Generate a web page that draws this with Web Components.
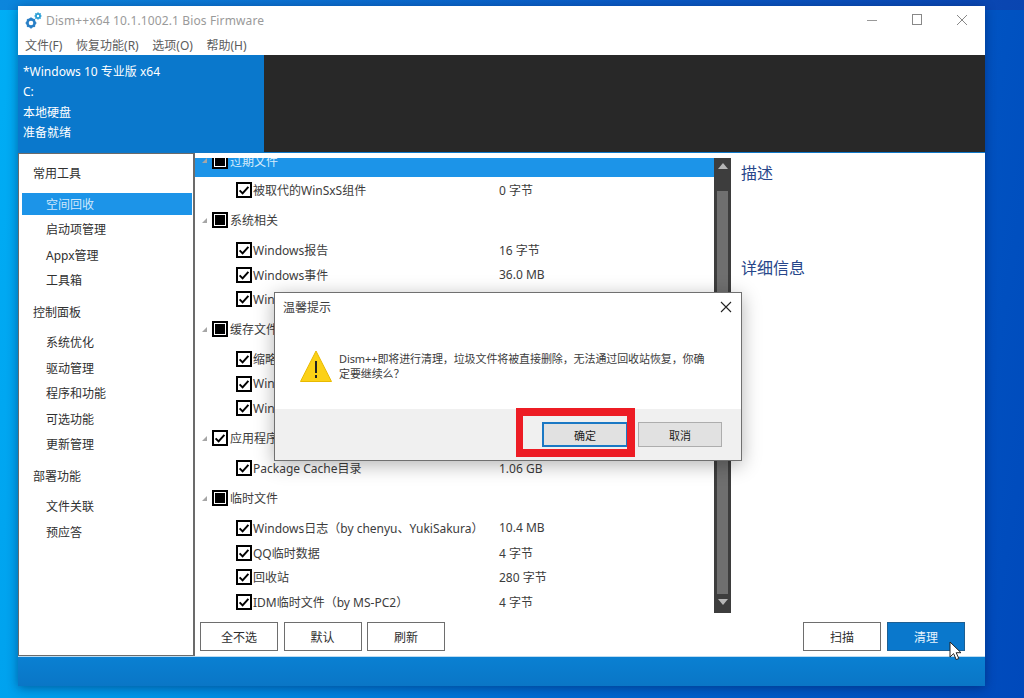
<!DOCTYPE html>
<html lang="zh">
<head>
<meta charset="utf-8">
<title>Dism++</title>
<style>
html, body { margin: 0; padding: 0; height: 698px; overflow: hidden; }
body {
  font-family: "Noto Sans", "Noto Sans CJK SC", sans-serif;
  font-size: 12px;
}
</style>
</head>
<body>
<dism-desktop>
  <dism-window>
    <dism-titlebar slot="top"></dism-titlebar>
    <dism-banner slot="top">
      <span>*Windows 10 专业版 x64</span>
      <span>C:</span>
      <span>本地硬盘</span>
      <span>准备就绪</span>
    </dism-banner>
    <dism-sidebar slot="side">
      <side-head>常用工具</side-head>
      <side-item selected>空间回收</side-item>
      <side-item>启动项管理</side-item>
      <side-item>Appx管理</side-item>
      <side-item>工具箱</side-item>
      <side-head>控制面板</side-head>
      <side-item>系统优化</side-item>
      <side-item>驱动管理</side-item>
      <side-item>程序和功能</side-item>
      <side-item>可选功能</side-item>
      <side-item>更新管理</side-item>
      <side-head>部署功能</side-head>
      <side-item>文件关联</side-item>
      <side-item>预应答</side-item>
    </dism-sidebar>
    <dism-tree slot="main">
      <tree-head selected state="mixed">过期文件</tree-head>
      <tree-item value="0 字节">被取代的WinSxS组件</tree-item>
      <tree-head state="mixed">系统相关</tree-head>
      <tree-item value="16 字节">Windows报告</tree-item>
      <tree-item value="36.0 MB">Windows事件</tree-item>
      <tree-item>Win</tree-item>
      <tree-head state="mixed">缓存文件</tree-head>
      <tree-item>缩略</tree-item>
      <tree-item>Win</tree-item>
      <tree-item>Win</tree-item>
      <tree-head state="checked">应用程序</tree-head>
      <tree-item value="1.06 GB">Package Cache目录</tree-item>
      <tree-head state="mixed">临时文件</tree-head>
      <tree-item value="10.4 MB">Windows日志（by chenyu、YukiSakura）</tree-item>
      <tree-item value="4 字节">QQ临时数据</tree-item>
      <tree-item value="280 字节">回收站</tree-item>
      <tree-item value="4 字节">IDM临时文件（by MS-PC2）</tree-item>
    </dism-tree>
    <dism-button slot="actions-left">全不选</dism-button>
    <dism-button slot="actions-left">默认</dism-button>
    <dism-button slot="actions-left">刷新</dism-button>
    <dism-info slot="info"></dism-info>
    <dism-button slot="actions-right">扫描</dism-button>
    <dism-button slot="actions-right" primary>清理</dism-button>
  </dism-window>
  <dism-alert slot="over">Dism++即将进行清理，垃圾文件将被直接删除，无法通过回收站恢复，你确定要继续么？</dism-alert>
  <red-mark slot="over"></red-mark>
  <mouse-cursor slot="over"></mouse-cursor>
</dism-desktop>

<script>
function define(name, html, setup) {
  const template = document.createElement("template");
  template.innerHTML = html;
  customElements.define(name, class extends HTMLElement {
    constructor() {
      super();
      this.attachShadow({ mode: "open" });
      this.shadowRoot.appendChild(template.content.cloneNode(true));
    }
    connectedCallback() {
      if (setup) setup(this, this.shadowRoot);
    }
  });
}

define("dism-desktop", `
<style>
:host {
  display: block;
  width: 1024px;
  height: 698px;
  box-sizing: border-box;
  padding: 6px 39px 12px 18px;
  position: relative;
  overflow: hidden;
  background: linear-gradient(100deg, #00aef5 0%, #0093e6 25%, #0068d0 60%, #0049bb 100%);
}
:host::before {
  content: "";
  position: absolute;
  left: 0; right: 0; top: 0;
  height: 10px;
  background: linear-gradient(90deg, #0c86dc, #0a5cc6 60%, #0a45b0);
}
</style>
<slot></slot>
<slot name="over"></slot>`);

define("dism-window", `
<style>
:host {
  display: flex;
  flex-direction: column;
  position: relative;
  width: 967px;
  height: 680px;
  background: #fff;
  box-shadow: 0 2px 10px rgba(0, 20, 70, .45);
}
.body { display: flex; height: 503px; border-top: 1px solid #0f78c8; }
.centre { width: 536px; display: flex; flex-direction: column; }
.bar { display: flex; gap: 5.5px; padding: 9px 0 0 5px; }
.right { flex: 1; display: flex; flex-direction: column; }
.bar.end { justify-content: flex-end; padding: 0 20px 0 0; gap: 6px; }
.status { flex: 1; background: linear-gradient(#0a80d2, #0a76c6); border-top: 1px solid #bcdcf2; }
</style>
<slot name="top"></slot>
<div class="body">
  <slot name="side"></slot>
  <div class="centre">
    <slot name="main"></slot>
    <div class="bar"><slot name="actions-left"></slot></div>
  </div>
  <div class="right">
    <slot name="info"></slot>
    <div class="bar end"><slot name="actions-right"></slot></div>
  </div>
</div>
<div class="status"></div>`);

define("dism-titlebar", `
<style>
:host { display: block; height: 49px; color: #9a9a9a; }
.top { display: flex; align-items: center; height: 28px; padding-left: 7px; }
.logo { width: 17px; height: 17px; margin-right: 4px; }
.name { letter-spacing: .13px; font-size: 12px; flex: 1; }
.ctl { width: 45px; height: 28px; display: flex; align-items: center; justify-content: center; }
.ctl svg { width: 12px; height: 12px; }
.menu { display: flex; color: #5c5c5c; height: 21px; align-items: center; padding-left: 7px; font-size: 12px; }
.menu span { margin-right: 13.6px; }
</style>
<div class="top">
  <svg class="logo" viewBox="0 0 17 17">
    <circle cx="6" cy="11" r="3.6" fill="none" stroke="#2a7fc6" stroke-width="2.6"/>
    <path d="M6 5.6v2M6 14.4v2M.6 11h2M9.4 11h2M2.2 7.2l1.4 1.4M8.4 13.4l1.4 1.4M2.2 14.8l1.4-1.4M8.4 8.6l1.4-1.4" stroke="#2a7fc6" stroke-width="1.6"/>
    <circle cx="13" cy="4" r="2.1" fill="none" stroke="#2a9fd6" stroke-width="1.8"/>
    <path d="M13 .3v1.2M13 6.5v1.2M9.3 4h1.2M15.5 4h1.2M10.4 1.4l.8.8M14.8 5.8l.8.8M10.4 6.6l.8-.8M14.8 2.2l.8-.8" stroke="#2a9fd6" stroke-width="1.1"/>
  </svg>
  <span class="name">Dism++x64 10.1.1002.1 Bios Firmware</span>
  <div class="ctl"><svg viewBox="0 0 12 12"><path d="M1 6.5h10" stroke="#999" fill="none"/></svg></div>
  <div class="ctl"><svg viewBox="0 0 12 12"><rect x="1.5" y=".5" width="9" height="10" stroke="#888" fill="none"/></svg></div>
  <div class="ctl" style="margin-right:1px"><svg viewBox="0 0 12 12"><path d="M1 1l10 10M11 1L1 11" stroke="#888" fill="none"/></svg></div>
</div>
<div class="menu">
  <span>文件(F)</span><span>恢复功能(R)</span><span>选项(O)</span><span>帮助(H)</span>
</div>`);

define("dism-banner", `
<style>
:host { display: flex; height: 97px; background: #282828; }
.info {
  width: 246px;
  background: #0a78cc;
  color: #fff;
  box-sizing: border-box;
  padding: 5.5px 0 0 5px;
  display: grid;
  grid-auto-rows: 20.5px;
  align-items: center;
}
::slotted(span) { display: block; }
</style>
<div class="info"><slot></slot></div>`);

define("dism-sidebar", `
<style>
:host {
  display: flex;
  flex-direction: column;
  flex: none;
  width: 177px;
  height: 503px;
  box-sizing: border-box;
  padding-top: 4px;
  background: #fff;
  border: 1px solid #6b6b6b;
  border-width: 1px 2px 1px 1px;
  color: #303030;
}
</style>
<slot></slot>`);

define("side-head", `
<style>
:host {
  display: flex;
  align-items: center;
  flex: none;
  height: 30px;
  margin: 3.5px 0 3px;
  padding-left: 14px;
}
:host(:first-child) { margin-top: 0; }
</style>
<slot></slot>`);

define("side-item", `
<style>
:host {
  display: flex;
  align-items: center;
  flex: none;
  height: 21.5px;
  margin: 2px 1px 2px 3px;
  padding-left: 24px;
}
:host([selected]) { background: #1c94e8; color: #cfe8fb; }
</style>
<slot></slot>`);

define("check-box", `
<style>
:host { display: block; width: 16px; height: 16px; flex: none; }
svg { display: block; }
</style>
<svg width="16" height="16" viewBox="0 0 16 16"></svg>`, (host, root) => {
  const state = host.getAttribute("state") || "checked";
  const mark = state === "mixed"
    ? '<rect x="3" y="3" width="10" height="10" fill="#000"/>'
    : '<path d="M3.6 8.4l3 3 5.8-6.6" fill="none" stroke="#000" stroke-width="2"/>';
  root.querySelector("svg").innerHTML =
    '<rect x="1" y="1" width="14" height="14" fill="#fff" stroke="#000" stroke-width="2"/>' + mark;
});

define("dism-tree", `
<style>
:host {
  display: flex;
  height: 455px;
  margin-top: 5px;
  color: #3c3c3c;
  overflow: hidden;
  position: relative;
}
.list { flex: 1; min-width: 0; display: flex; flex-direction: column; margin-top: -15px; }
.scroll {
  width: 17px;
  height: 455px;
  background: #3d3d3d;
  display: flex;
  flex-direction: column;
  align-items: center;
  box-sizing: border-box;
  padding: 0 3px;
}
.arrow { height: 33px; flex: none; width: 100%; position: relative; }
.arrow.down { height: 19px; }
.arrow svg { position: absolute; left: 1px; top: 5px; }
.thumb { flex: 1; width: 11px; background: #6f6f6f; }
</style>
<div class="list"><slot></slot></div>
<div class="scroll">
  <div class="arrow"><svg width="10" height="6" viewBox="0 0 10 6"><path d="M5 0l5 6H0z" fill="#b5b5b5"/></svg></div>
  <div class="thumb"></div>
  <div class="arrow down"><svg width="10" height="6" viewBox="0 0 10 6"><path d="M0 0h10L5 6z" fill="#b5b5b5"/></svg></div>
</div>`);

define("tree-head", `
<style>
:host {
  display: flex;
  align-items: center;
  height: 32px;
  flex: none;
  margin: 1.5px 0;
  padding-left: 5px;
  gap: 3px;
}
:host([selected]) { background: #1c94e8; color: #d6ecfb; }
svg { flex: none; }
.box { display: block; flex: none; width: 16px; height: 16px; margin-right: -1px; }
</style>
<svg width="9" height="9" viewBox="0 0 9 9"><path d="M7 2v5H2z" fill="#a6a6a6"/></svg>
<span class="box"></span>
<slot></slot>`, (host, root) => {
  root.querySelector(".box").innerHTML = `<check-box state="${host.getAttribute("state")}"></check-box>`;
});

define("tree-item", `
<style>
:host {
  display: flex;
  align-items: center;
  height: 24.7px;
  flex: none;
  padding-left: 41px;
  position: relative;
  white-space: nowrap;
}
.label { margin-left: 1px; }
.value { position: absolute; left: 304px; }
</style>
<check-box></check-box>
<span class="label"><slot></slot></span>
<span class="value"></span>`, (host, root) => {
  root.querySelector(".value").textContent = host.getAttribute("value") || "";
});

define("dism-button", `
<style>
:host {
  display: flex;
  align-items: center;
  justify-content: center;
  width: 78px;
  height: 29px;
  box-sizing: border-box;
  border: 1px solid #6e6e6e;
  background: #fff;
  color: #2e2e2e;
}
:host([primary]) { background: #0a78cc; color: #e6f4fd; border-color: #1d5f93; }
</style>
<slot></slot>`);

define("dism-info", `
<style>
:host {
  display: block;
  height: 469px;
  box-sizing: border-box;
  padding-left: 10px;
  color: #27468a;
  font-size: 16px;
}
div { height: 95px; line-height: 22px; padding-top: 9px; box-sizing: border-box; }
</style>
<div>描述</div>
<div>详细信息</div>`);

define("dism-alert", `
<style>
:host {
  position: absolute;
  left: 274px;
  top: 292px;
  width: 468px;
  height: 169px;
  box-sizing: border-box;
  display: flex;
  flex-direction: column;
  background: #fff;
  border: 1px solid #707070;
  box-shadow: 0 4px 18px rgba(0, 0, 0, .3);
  color: #3c3c3c;
  font-size: 11px;
}
.head { display: flex; justify-content: space-between; align-items: center; height: 28px; padding: 0 9px 0 8px; font-size: 12px; }
.body { flex: 1; display: flex; padding: 29px 28px 0 25px; gap: 7px; }
.body svg { flex: none; }
.msg { line-height: 15px; padding-top: 1px; letter-spacing: -.1px; }
.foot { height: 51px; background: #f0f0f0; display: flex; justify-content: flex-end; gap: 10px; padding: 13px 19px 0 0; box-sizing: border-box; }
.btn { width: 84px; height: 25px; box-sizing: border-box; display: flex; align-items: center; justify-content: center; background: #e1e1e1; border: 1px solid #adadad; color: #222; }
.btn.def { border: 2px solid #1a78c4; width: 86px; }
</style>
<div class="head">
  <span>温馨提示</span>
  <svg width="12" height="12" viewBox="0 0 12 12"><path d="M1 1l10 10M11 1L1 11" stroke="#222" fill="none" stroke-width="1.1"/></svg>
</div>
<div class="body">
  <svg width="32" height="32" viewBox="0 0 32 32">
    <path d="M16 1L31.5 31.5H.5z" fill="#fcd116" stroke="#e8b900" stroke-linejoin="round"/>
    <path d="M16 11v12" stroke="#222" stroke-width="2"/>
    <path d="M16 25v3" stroke="#222" stroke-width="2"/>
  </svg>
  <div class="msg"><slot></slot></div>
</div>
<div class="foot">
  <div class="btn def">确定</div>
  <div class="btn">取消</div>
</div>`);

define("red-mark", `
<style>
:host {
  position: absolute;
  left: 516px;
  top: 408px;
  width: 119px;
  height: 49px;
  box-sizing: border-box;
  border: 8px solid #ed1c24;
  border-left-width: 7px;
}
</style>`);

define("mouse-cursor", `
<style>
:host { position: absolute; left: 949px; top: 641px; width: 14px; height: 20px; }
</style>
<svg width="14" height="20" viewBox="0 0 14 20">
  <path d="M1 1v15l3.6-3.4 2.6 6 2.6-1.1-2.6-5.8H12z" fill="#fff" stroke="#222" stroke-width="1"/>
</svg>`);
</script>
</body>
</html>
